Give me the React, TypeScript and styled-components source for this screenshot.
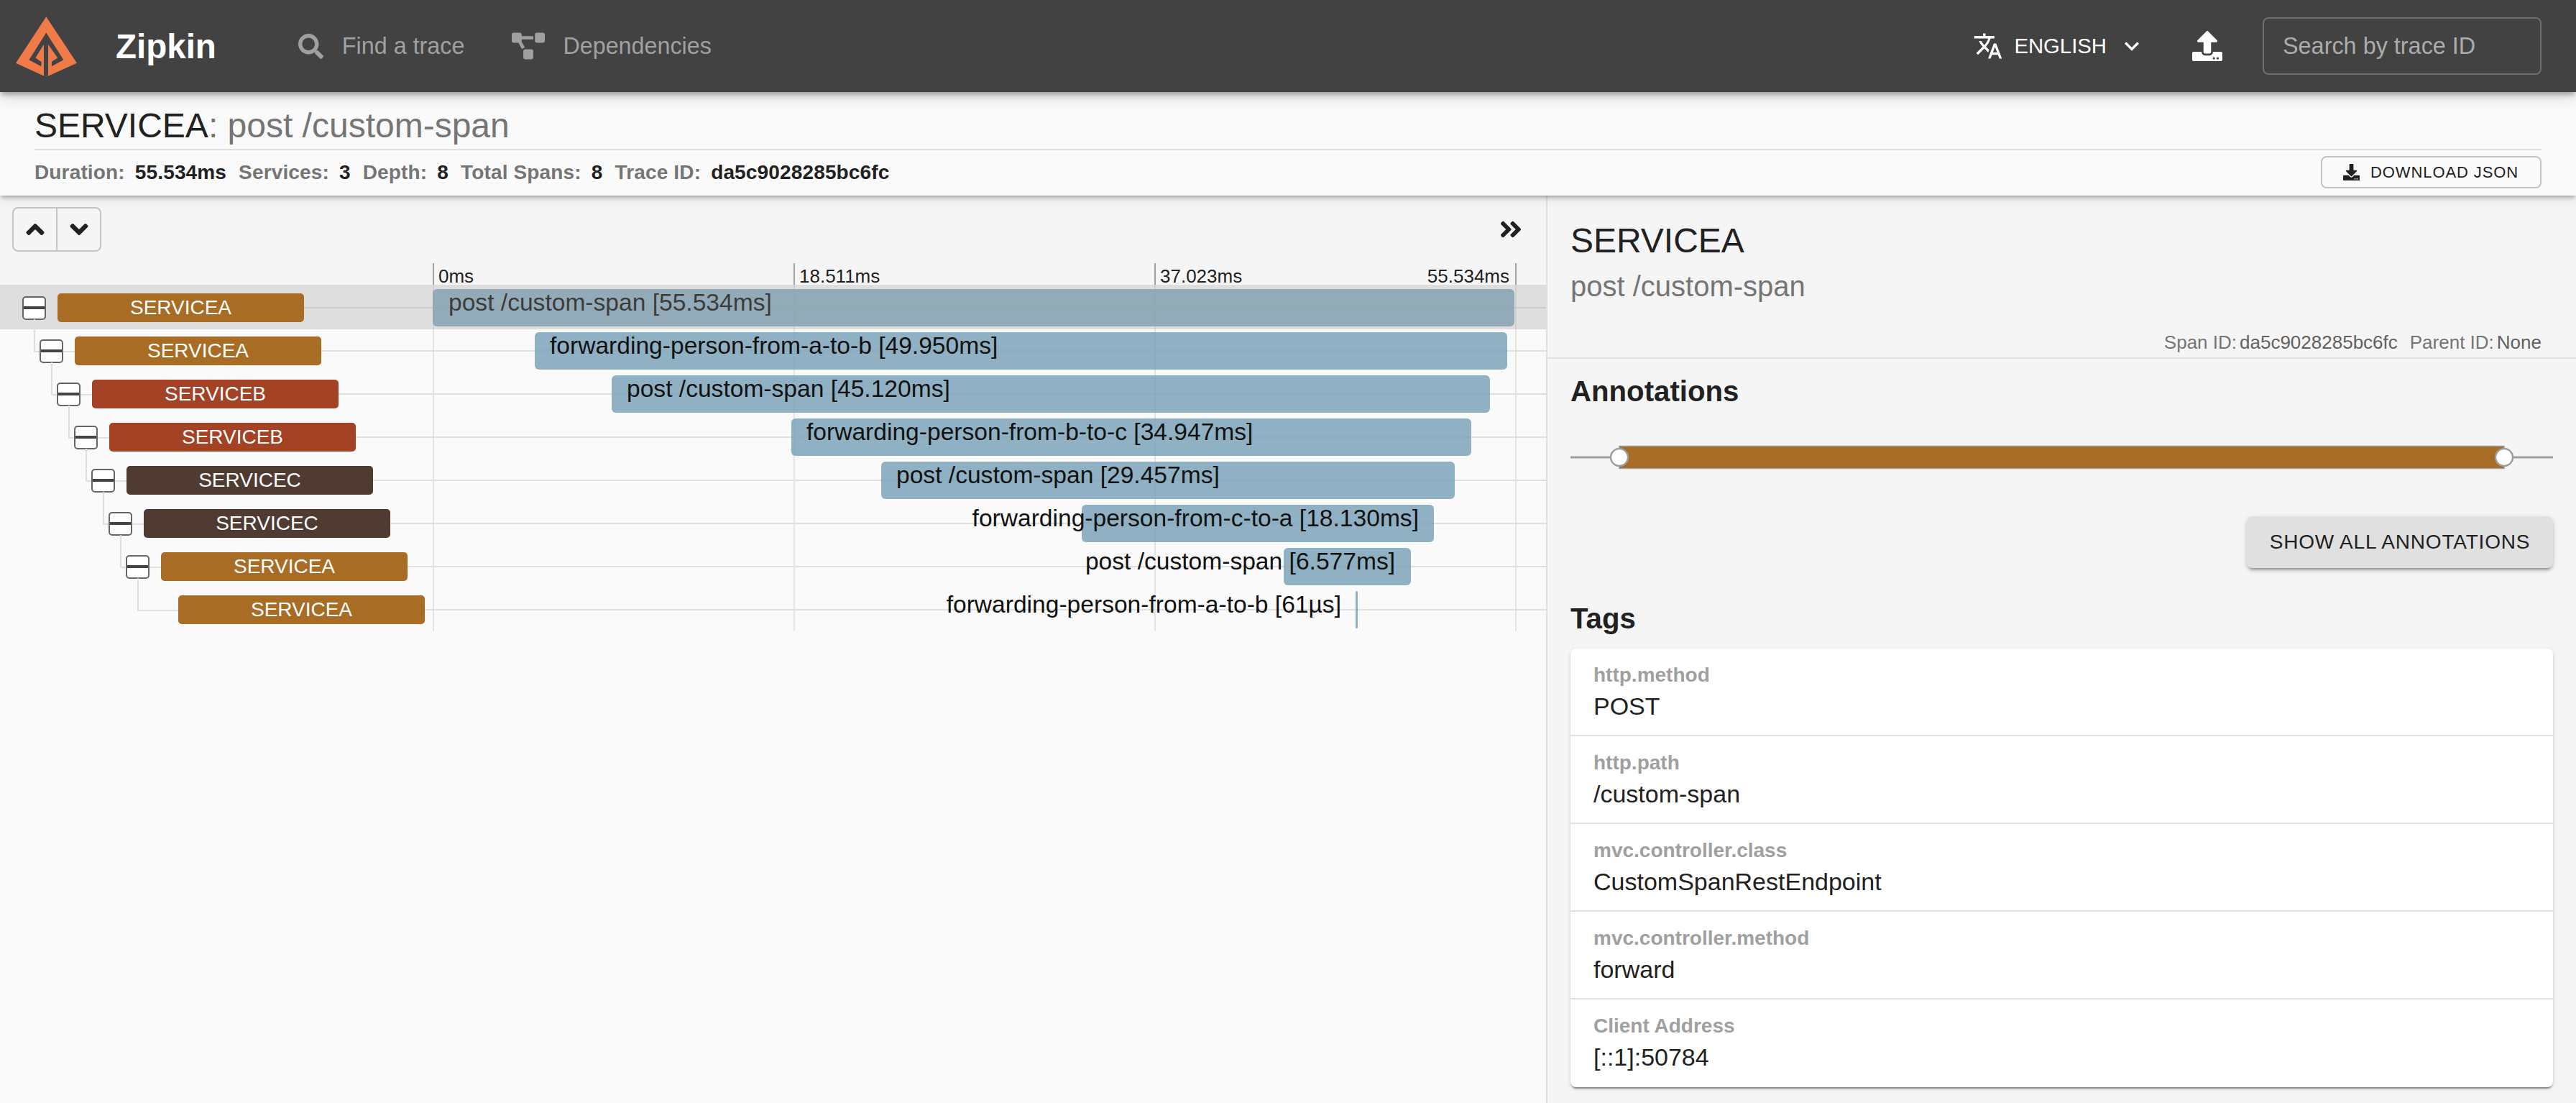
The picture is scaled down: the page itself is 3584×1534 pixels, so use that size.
import React from "react";
import styled, { createGlobalStyle } from "styled-components";
import {
  FaAngleDoubleRight,
  FaAngleDown,
  FaAngleUp,
  FaDownload,
  FaProjectDiagram,
  FaSearch,
  FaUpload,
} from "react-icons/fa";
import { MdExpandMore, MdTranslate } from "react-icons/md";

const SERVICE_COLORS: Record<string, string> = {
  SERVICEA: "#a86c25",
  SERVICEB: "#a44225",
  SERVICEC: "#503b33",
};

type Span = {
  service: string;
  name: string;
  start: number;
  width: number;
  labelX: number;
  labelEnd?: boolean;
};

// pixel values are relative to the left edge of the timeline
const SPANS: Span[] = [
  { service: "SERVICEA", name: "post /custom-span [55.534ms]", start: -1, width: 1505, labelX: 21 },
  { service: "SERVICEA", name: "forwarding-person-from-a-to-b [49.950ms]", start: 141, width: 1353, labelX: 162 },
  { service: "SERVICEB", name: "post /custom-span [45.120ms]", start: 248, width: 1222, labelX: 269 },
  { service: "SERVICEB", name: "forwarding-person-from-b-to-c [34.947ms]", start: 498, width: 946, labelX: 519 },
  { service: "SERVICEC", name: "post /custom-span [29.457ms]", start: 623, width: 798, labelX: 644 },
  { service: "SERVICEC", name: "forwarding-person-from-c-to-a [18.130ms]", start: 902, width: 490, labelX: 1371, labelEnd: true },
  { service: "SERVICEA", name: "post /custom-span [6.577ms]", start: 1183, width: 177, labelX: 1338, labelEnd: true },
  { service: "SERVICEA", name: "forwarding-person-from-a-to-b [61µs]", start: 1283, width: 3, labelX: 1263, labelEnd: true },
];

const TAGS = [
  { label: "http.method", value: "POST" },
  { label: "http.path", value: "/custom-span" },
  { label: "mvc.controller.class", value: "CustomSpanRestEndpoint" },
  { label: "mvc.controller.method", value: "forward" },
  { label: "Client Address", value: "[::1]:50784" },
];

const STATS = [
  { label: "Duration:", value: "55.534ms" },
  { label: "Services:", value: "3" },
  { label: "Depth:", value: "8" },
  { label: "Total Spans:", value: "8" },
  { label: "Trace ID:", value: "da5c9028285bc6fc" },
];

const GlobalStyle = createGlobalStyle`
  html, body {
    margin: 0;
    padding: 0;
    background: #fafafa;
  }
  * {
    box-sizing: border-box;
  }
  body {
    font-family: "Liberation Sans", Arial, sans-serif;
    color: #212121;
  }
`;

const App = () => {
  return (
    <>
      <GlobalStyle />
      <Page>
        <Header>
          <Logo viewBox="21.5 23 85.5 83" aria-label="Zipkin logo">
            <path d="M64 23 L107 88 L66.7 106 L61 106 L21.5 88 Z" fill="#ee7b48" />
            <path
              d="M64 45.5 L40 83.3 L57 92.3 L57.5 86.5 L49 80.7 L60.7 61.7 L60.7 106 L66.8 106 L66.8 61.7 L80 80.7 L71.7 86 L71.7 92.3 L88.3 83.3 Z"
              fill="#424242"
            />
          </Logo>
          <Brand>Zipkin</Brand>
          <Nav>
            <NavItem>
              <FaSearch size={35} />
              Find a trace
            </NavItem>
            <NavItem>
              <FaProjectDiagram size={46} />
              Dependencies
            </NavItem>
          </Nav>
          <HeaderRight>
            <LangSelect>
              <MdTranslate size={42} />
              <LangText>ENGLISH</LangText>
              <MdExpandMore size={40} />
            </LangSelect>
            <UploadIcon>
              <FaUpload size={42} />
            </UploadIcon>
            <SearchBox placeholder="Search by trace ID" />
          </HeaderRight>
        </Header>

        <TraceSummary>
          <TraceTitle>
            SERVICEA<TitleRest>: post /custom-span</TitleRest>
          </TraceTitle>
          <StatsRow>
            <Stats>
              {STATS.map((s) => (
                <React.Fragment key={s.label}>
                  <StatLabel>{s.label}</StatLabel>
                  <StatValue>{s.value}</StatValue>
                </React.Fragment>
              ))}
            </Stats>
            <DownloadButton>
              <FaDownload size={23} />
              DOWNLOAD JSON
            </DownloadButton>
          </StatsRow>
        </TraceSummary>

        <Main>
          <TracePanel>
            <Toolbar>
              <ButtonGroup>
                <GroupButton>
                  <FaAngleUp size={40} />
                </GroupButton>
                <GroupButton>
                  <FaAngleDown size={40} />
                </GroupButton>
              </ButtonGroup>
              <CollapseIcon>
                <FaAngleDoubleRight size={36} />
              </CollapseIcon>
            </Toolbar>

            <Ticks>
              <Tick>0ms</Tick>
              <Tick>18.511ms</Tick>
              <Tick $last>
                <span>37.023ms</span>
                <span>55.534ms</span>
              </Tick>
            </Ticks>

            <Rows>
              <GridLines>
                <GridCell />
                <GridCell />
                <GridCell $last />
              </GridLines>
              {SPANS.map((span, i) => {
                const leaf = i === SPANS.length - 1;
                return (
                  <Row key={i} $depth={i}>
                    <TreeCell $depth={i}>
                      <Connector $depth={i} />
                      <ToggleSlot>
                        {!leaf && (
                          <ToggleBox>
                            <ToggleBar />
                          </ToggleBox>
                        )}
                      </ToggleSlot>
                      <ServiceLabel $color={SERVICE_COLORS[span.service]}>{span.service}</ServiceLabel>
                    </TreeCell>
                    <Track>
                      <SpanBar style={{ left: span.start, width: span.width }} />
                      <SpanName $end={span.labelEnd} style={{ left: span.labelX }}>
                        {span.name}
                      </SpanName>
                    </Track>
                    {i === 0 && <SelectedOverlay />}
                  </Row>
                );
              })}
            </Rows>
          </TracePanel>

          <DetailPanel>
            <DetailHead>
              <DetailTitle>SERVICEA</DetailTitle>
              <DetailSubtitle>post /custom-span</DetailSubtitle>
              <SpanIds>
                <IdLabel>Span ID:</IdLabel>
                <IdValue>da5c9028285bc6fc</IdValue>
                <IdLabel>Parent ID:</IdLabel>
                <IdValue>None</IdValue>
              </SpanIds>
            </DetailHead>
            <DetailBody>
              <SectionTitle>Annotations</SectionTitle>
              <AnnotationGraph viewBox="0 0 1367 40">
                <line x1="0" y1="20" x2="1367" y2="20" stroke="#9e9e9e" strokeWidth="3" />
                <rect x="68" y="4.5" width="1231" height="31" fill="#a86c25" stroke="#9e9e9e" strokeWidth="1.5" />
                <circle cx="68" cy="20" r="12" fill="#fff" stroke="#9e9e9e" strokeWidth="2.5" />
                <circle cx="1299" cy="20" r="12" fill="#fff" stroke="#9e9e9e" strokeWidth="2.5" />
              </AnnotationGraph>
              <ShowAllRow>
                <ShowAllButton>SHOW ALL ANNOTATIONS</ShowAllButton>
              </ShowAllRow>
              <TagsTitle>Tags</TagsTitle>
              <TagCard>
                {TAGS.map((t) => (
                  <TagRow key={t.label}>
                    <TagLabel>{t.label}</TagLabel>
                    <TagValue>{t.value}</TagValue>
                  </TagRow>
                ))}
              </TagCard>
            </DetailBody>
          </DetailPanel>
        </Main>
      </Page>
    </>
  );
};

const Page = styled.div`
  display: flex;
  flex-direction: column;
  width: 3584px;
  height: 1534px;
  overflow: hidden;
`;

const Header = styled.header`
  position: relative;
  z-index: 3;
  display: flex;
  align-items: center;
  flex: none;
  height: 128px;
  padding: 0 48px 0 22px;
  background: #424242;
  box-shadow: 0 4px 8px -1px rgba(0, 0, 0, 0.35), 0 8px 20px rgba(0, 0, 0, 0.12);
`;

const Logo = styled.svg`
  width: 85px;
  height: 83px;
  flex: none;
  margin-top: 1px;
`;

const Brand = styled.div`
  margin-left: 54px;
  color: #fff;
  font-size: 47.5px;
  font-weight: 700;
`;

const Nav = styled.nav`
  display: flex;
  align-items: center;
  gap: 66px;
  margin-left: 114px;
`;

const NavItem = styled.div`
  display: flex;
  align-items: center;
  gap: 26px;
  color: #a0a0a0;
  font-size: 32.3px;

  & + & {
    gap: 25px;
  }
`;

const HeaderRight = styled.div`
  display: flex;
  align-items: center;
  margin-left: auto;
`;

const LangSelect = styled.div`
  display: flex;
  align-items: center;
  color: #fff;
`;

const LangText = styled.span`
  margin: 0 15px 0 15px;
  font-size: 29.3px;
`;

const UploadIcon = styled.div`
  display: flex;
  margin: 0 56px 0 64px;
  color: #fff;
`;

const SearchBox = styled.input`
  width: 388px;
  height: 80px;
  padding: 0 26px;
  background: transparent;
  border: 2px solid #6e6e6e;
  border-radius: 8px;
  outline: none;
  color: #fff;
  font-family: inherit;
  font-size: 32.4px;

  &::placeholder {
    color: #acacac;
    opacity: 1;
  }
`;

const TraceSummary = styled.section`
  position: relative;
  z-index: 2;
  flex: none;
  height: 144px;
  padding: 0 48px;
  background: #fafafa;
  box-shadow: 0 3px 6px -1px rgba(0, 0, 0, 0.35), 0 6px 14px rgba(0, 0, 0, 0.08);
`;

const TraceTitle = styled.div`
  height: 81px;
  padding-top: 24px;
  border-bottom: 2px solid #e0e0e0;
  color: #212121;
  font-size: 48px;
  line-height: 46px;
`;

const TitleRest = styled.span`
  color: #757575;
`;

const StatsRow = styled.div`
  display: flex;
  align-items: center;
  justify-content: space-between;
  height: 61px;
`;

const Stats = styled.div`
  display: flex;
  align-items: center;
  font-size: 28px;
  font-weight: 700;
  letter-spacing: 0.15px;
`;

const StatLabel = styled.span`
  color: #757575;
`;

const StatValue = styled.span`
  margin: 0 17px 0 14px;
  color: #212121;
`;

const DownloadButton = styled.button`
  display: flex;
  align-items: center;
  gap: 15px;
  width: 307px;
  height: 45px;
  padding: 0 0 0 29px;
  background: transparent;
  border: 2px solid #c4c4c4;
  border-radius: 8px;
  color: #212121;
  font-family: inherit;
  font-size: 22px;
  letter-spacing: 0.9px;
  white-space: nowrap;
`;

const Main = styled.main`
  display: flex;
  flex: 1;
  min-height: 0;
`;

const TracePanel = styled.div`
  flex: none;
  width: 2151px;
`;

const Toolbar = styled.div`
  display: flex;
  align-items: flex-start;
  justify-content: space-between;
  height: 94px;
  padding: 16px 31px 0 17px;
  background: #f5f5f5;
`;

const ButtonGroup = styled.div`
  display: flex;
  width: 124px;
  height: 62px;
  border: 2px solid #c4c4c4;
  border-radius: 8px;
`;

const GroupButton = styled.div`
  display: flex;
  align-items: center;
  justify-content: center;
  flex: 1;
  color: #212121;

  & + & {
    border-left: 2px solid #c4c4c4;
  }
`;

const CollapseIcon = styled.div`
  display: flex;
  margin-top: 13px;
  color: #212121;
`;

const Ticks = styled.div`
  display: flex;
  height: 30px;
  padding-left: 602px;
  background: #f5f5f5;
`;

const Tick = styled.div<{ $last?: boolean }>`
  display: flex;
  justify-content: space-between;
  width: ${(p) => (p.$last ? 504 : 502)}px;
  padding: 0 8px 0 6px;
  border-left: 2px solid #a0a0a0;
  border-right: ${(p) => (p.$last ? "2px solid #a0a0a0" : "none")};
  color: #212121;
  font-size: 26px;
  line-height: 36px;
`;

const Rows = styled.div`
  position: relative;
  padding-top: 2px;
`;

const GridLines = styled.div`
  position: absolute;
  top: 0;
  bottom: 0;
  left: 602px;
  display: flex;
`;

const GridCell = styled.div<{ $last?: boolean }>`
  width: ${(p) => (p.$last ? 504 : 502)}px;
  border-left: 2px solid #e4e4e4;
  border-right: ${(p) => (p.$last ? "2px solid #e4e4e4" : "none")};
`;

const Row = styled.div<{ $depth: number }>`
  position: relative;
  display: flex;
  align-items: center;
  height: 60px;

  &::after {
    content: "";
    position: absolute;
    top: 29px;
    right: 0;
    left: ${(p) => 423 + p.$depth * 24}px;
    height: 2px;
    background: #e0e0e0;
  }
`;

const TreeCell = styled.div<{ $depth: number }>`
  position: relative;
  z-index: 2;
  display: flex;
  align-items: center;
  flex: none;
  gap: 16px;
  width: 603px;
  height: 100%;
  padding-left: ${(p) => 31 + p.$depth * 24}px;
`;

const Connector = styled.span<{ $depth: number }>`
  position: absolute;
  left: ${(p) => (p.$depth === 0 ? 47 : 23 + p.$depth * 24)}px;
  top: ${(p) => (p.$depth === 0 ? 29 : -14)}px;
  width: ${(p) => (p.$depth === 0 ? 33 : 57)}px;
  height: ${(p) => (p.$depth === 0 ? 2 : 46)}px;
  border-bottom: 2px solid #e0e0e0;
  border-left: ${(p) => (p.$depth === 0 ? "none" : "2px solid #e0e0e0")};
`;

const ToggleSlot = styled.div`
  position: relative;
  flex: none;
  width: 33px;
  height: 33px;
`;

const ToggleBox = styled.div`
  display: flex;
  align-items: center;
  width: 100%;
  height: 100%;
  background: #fff;
  border: 2px solid #666;
  border-radius: 5px;
`;

const ToggleBar = styled.div`
  width: 100%;
  height: 4px;
  background: #444;
`;

const ServiceLabel = styled.div<{ $color: string }>`
  position: relative;
  flex: none;
  width: 343px;
  height: 40px;
  background: ${(p) => p.$color};
  border-radius: 5px;
  color: #fff;
  font-size: 28px;
  line-height: 40px;
  text-align: center;
`;

const Track = styled.div`
  position: relative;
  flex: none;
  width: 1506px;
  height: 100%;
`;

const SpanBar = styled.div`
  position: absolute;
  z-index: 1;
  top: 4px;
  height: 52px;
  background: rgba(125, 164, 185, 0.86);
  border-radius: 6px;
`;

const SpanName = styled.div<{ $end?: boolean }>`
  position: absolute;
  z-index: 1;
  top: 3px;
  color: #111;
  font-size: 33.6px;
  line-height: 40px;
  white-space: nowrap;
  transform: ${(p) => (p.$end ? "translateX(-100%)" : "none")};
`;

const SelectedOverlay = styled.div`
  position: absolute;
  z-index: 1;
  top: -2px;
  right: 0;
  bottom: 0;
  left: 0;
  background: rgba(158, 158, 158, 0.3);
`;

const DetailPanel = styled.aside`
  flex: 1;
  min-width: 0;
  background: #f5f5f5;
  border-left: 2px solid #e0e0e0;
`;

const DetailHead = styled.div`
  height: 227px;
  padding: 38px 48px 0 32px;
  border-bottom: 2px solid #e0e0e0;
`;

const DetailTitle = styled.div`
  color: #212121;
  font-size: 48px;
  line-height: 50px;
`;

const DetailSubtitle = styled.div`
  margin-top: 14px;
  color: #757575;
  font-size: 40px;
  line-height: 48px;
`;

const SpanIds = styled.div`
  display: flex;
  justify-content: flex-end;
  margin-top: 39px;
  font-size: 26px;
  line-height: 30px;
`;

const IdLabel = styled.span`
  margin-right: 4px;
  color: #757575;
`;

const IdValue = styled.span`
  color: #616161;

  & + span {
    margin-left: 17px;
  }
`;

const DetailBody = styled.div`
  padding: 23px 32px 0;
`;

const SectionTitle = styled.div`
  color: #212121;
  font-size: 40.2px;
  font-weight: 700;
  line-height: 46px;
`;

const AnnotationGraph = styled.svg`
  display: block;
  width: 1367px;
  height: 40px;
  margin-top: 48px;
`;

const ShowAllRow = styled.div`
  display: flex;
  justify-content: flex-end;
  margin-top: 62px;
`;

const ShowAllButton = styled.button`
  width: 426px;
  height: 72px;
  padding: 0;
  background: #e0e0e0;
  border: none;
  border-radius: 8px;
  box-shadow: 0 6px 2px -4px rgba(0, 0, 0, 0.2), 0 4px 4px 0 rgba(0, 0, 0, 0.14), 0 2px 10px 0 rgba(0, 0, 0, 0.12);
  color: #212121;
  font-family: inherit;
  font-size: 28px;
  letter-spacing: 0.8px;
`;

const TagsTitle = styled(SectionTitle)`
  margin-top: 48px;
`;

const TagCard = styled.div`
  margin-top: 18px;
  background: #fff;
  border-radius: 8px;
  box-shadow: 0 4px 2px -2px rgba(0, 0, 0, 0.3), 0 2px 2px 0 rgba(0, 0, 0, 0.14), 0 2px 6px 0 rgba(0, 0, 0, 0.12);
`;

const TagRow = styled.div`
  height: 122px;
  padding: 22px 32px 0;
  border-bottom: 2px solid #e0e0e0;

  &:last-child {
    border-bottom: none;
  }
`;

const TagLabel = styled.div`
  color: #a0a0a0;
  font-size: 28px;
  font-weight: 700;
  line-height: 30px;
`;

const TagValue = styled.div`
  margin-top: 8px;
  color: #212121;
  font-size: 34px;
  line-height: 40px;
`;

export default App;
